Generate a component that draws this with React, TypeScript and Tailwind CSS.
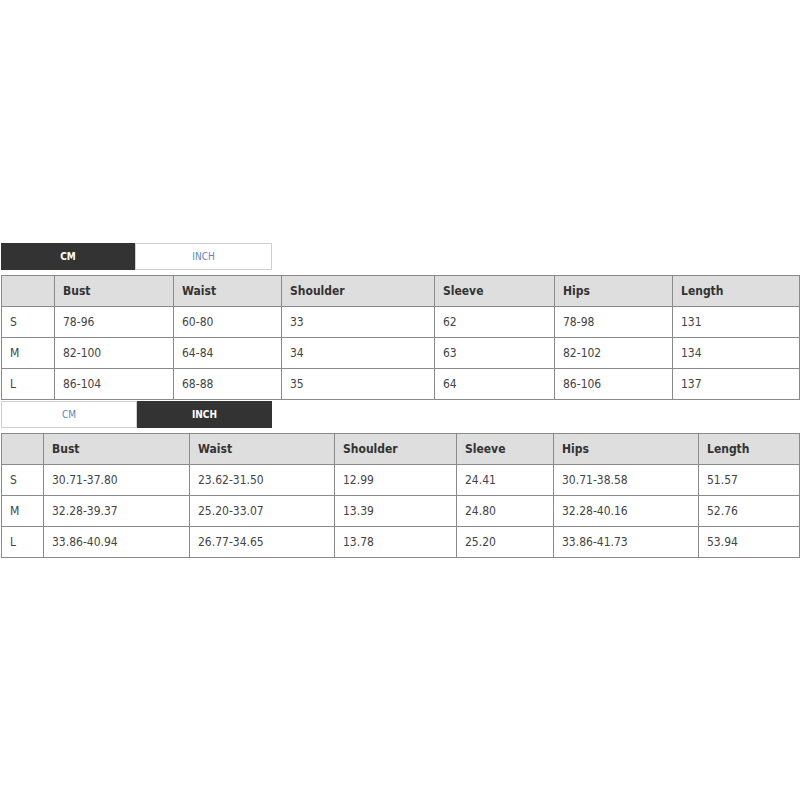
import React from "react";

const sizes = ["S", "M", "L"];
const headers = ["", "Bust", "Waist", "Shoulder", "Sleeve", "Hips", "Length"];

const cmData = [
  ["S", "78-96", "60-80", "33", "62", "78-98", "131"],
  ["M", "82-100", "64-84", "34", "63", "82-102", "134"],
  ["L", "86-104", "68-88", "35", "64", "86-106", "137"],
];
const inchData = [
  ["S", "30.71-37.80", "23.62-31.50", "12.99", "24.41", "30.71-38.58", "51.57"],
  ["M", "32.28-39.37", "25.20-33.07", "13.39", "24.80", "32.28-40.16", "52.76"],
  ["L", "33.86-40.94", "26.77-34.65", "13.78", "25.20", "33.86-41.73", "53.94"],
];

function Table({ cols, data }: { cols: string; data: string[][] }) {
  return (
    <div
      className={`ml-px grid w-[799px] border-l border-t border-[#8a8a8a] ${cols}`}
    >
      {headers.map((h, i) => (
        <div
          key={"h" + i}
          className="flex h-[31px] items-center border-b border-r border-[#8a8a8a] bg-[#dedede] pl-[8px] text-[12px] font-bold text-[#333]"
        >
          {h}
        </div>
      ))}
      {data.map((row, r) =>
        row.map((c, i) => (
          <div
            key={r + "-" + i}
            className="flex h-[31px] items-center border-b border-r border-[#8a8a8a] bg-white pl-[8px] text-[12px] text-[#444]"
          >
            {c}
          </div>
        ))
      )}
    </div>
  );
}

export default function App() {
  void sizes;
  return (
    <div
      className="h-[800px] w-[800px] bg-white"
      style={{ fontFamily: '"DejaVu Sans Condensed", "DejaVu Sans", sans-serif' }}
    >
      <div className="h-[243px]" />
      <div className="ml-px flex">
        <div className="flex h-[27px] w-[134px] items-center justify-center bg-[#333] text-[10px] font-bold text-white">
          CM
        </div>
        <div className="flex h-[27px] w-[137px] items-center justify-center border border-[#cfcfcf] bg-white text-[10px] text-[#5b86b8]">
          INCH
        </div>
      </div>
      <div className="h-[5px]" />
      <Table cols="grid-cols-[53px_119px_108px_153px_120px_118px_127px]" data={cmData} />
      <div className="h-px" />
      <div className="ml-px flex">
        <div className="flex h-[27px] w-[136px] items-center justify-center border border-[#cfcfcf] bg-white text-[10px] text-[#5b86b8]">
          CM
        </div>
        <div className="flex h-[27px] w-[135px] items-center justify-center bg-[#333] text-[10px] font-bold text-white">
          INCH
        </div>
      </div>
      <div className="h-[5px]" />
      <Table cols="grid-cols-[42px_146px_145px_122px_97px_145px_101px]" data={inchData} />
    </div>
  );
}
